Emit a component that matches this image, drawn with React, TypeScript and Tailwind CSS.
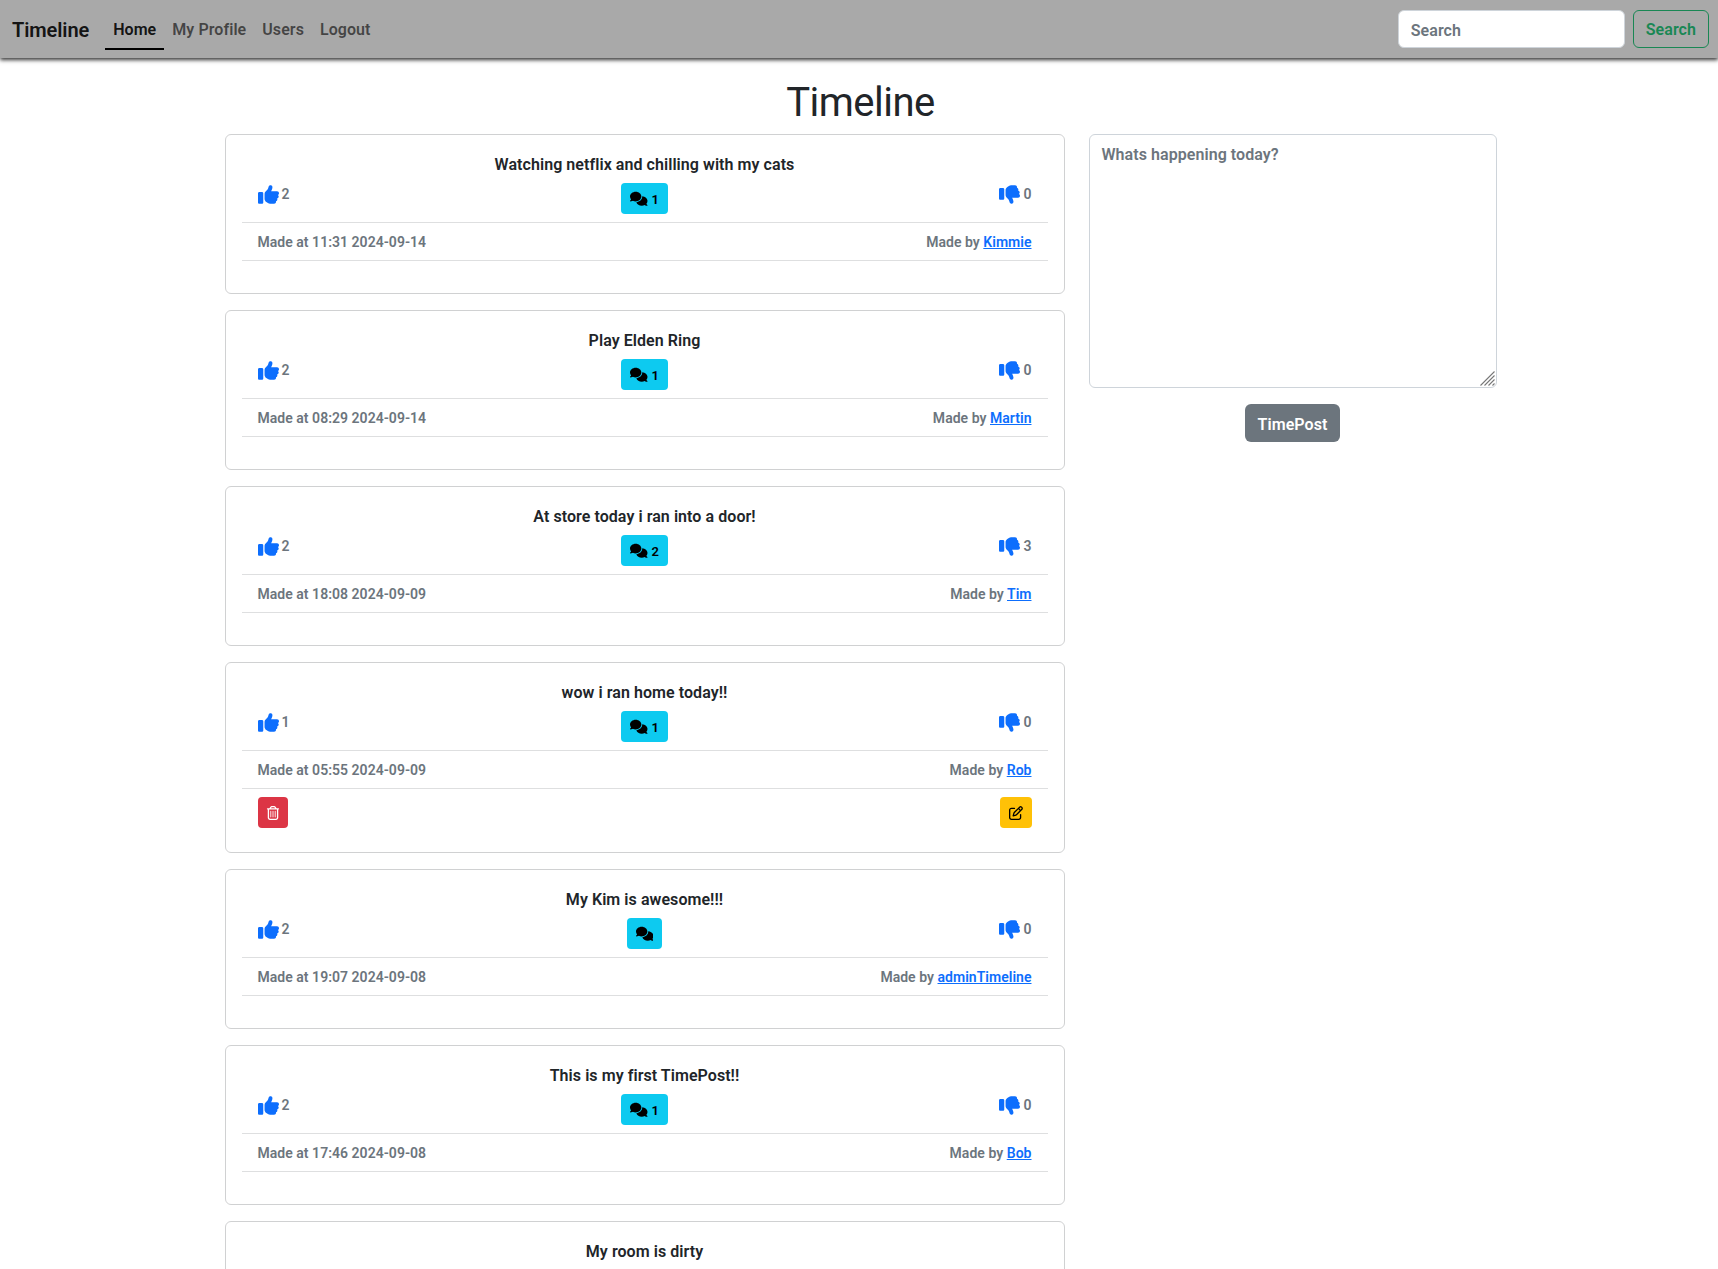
import React from "react";
import { FaComments, FaThumbsUp, FaThumbsDown, FaRegTrashCan, FaRegPenToSquare } from "react-icons/fa6";

type Stats = { likes: number; comments?: number; dislikes: number; at: string; by: string };
type Post = { text: string; stats?: Stats; own?: boolean };

const posts: Post[] = [
  { text: "Watching netflix and chilling with my cats", stats: { likes: 2, comments: 1, dislikes: 0, at: "11:31 2024-09-14", by: "Kimmie" } },
  { text: "Play Elden Ring", stats: { likes: 2, comments: 1, dislikes: 0, at: "08:29 2024-09-14", by: "Martin" } },
  { text: "At store today i ran into a door!", stats: { likes: 2, comments: 2, dislikes: 3, at: "18:08 2024-09-09", by: "Tim" } },
  { text: "wow i ran home today!!", stats: { likes: 1, comments: 1, dislikes: 0, at: "05:55 2024-09-09", by: "Rob" }, own: true },
  { text: "My Kim is awesome!!!", stats: { likes: 2, dislikes: 0, at: "19:07 2024-09-08", by: "adminTimeline" } },
  { text: "This is my first TimePost!!", stats: { likes: 2, comments: 1, dislikes: 0, at: "17:46 2024-09-08", by: "Bob" } },
  { text: "My room is dirty" },
];

function PostStats({ stats }: { stats: Stats }) {
  return (
    <>
      <div className="mt-[6px] grid h-[39px] grid-cols-3 px-4 text-[14px] text-[#6c757d]">
        <div className="flex h-[22px] items-center gap-[3px]">
          <FaThumbsUp className="text-[21px] text-[#0d6efd]" />
          {stats.likes}
        </div>
        <div className="flex items-start justify-center">
          <button className="flex h-[31px] items-center gap-[4px] rounded bg-[#0dcaf0] px-[9px] text-[14px] text-black">
            <FaComments className="mt-px text-[17.5px]" />
            {stats.comments !== undefined && <span className="pt-[2px] text-[13px]">{stats.comments}</span>}
          </button>
        </div>
        <div className="flex h-[22px] items-center justify-end gap-[3px]">
          <FaThumbsDown className="text-[21px] text-[#0d6efd]" />
          {stats.dislikes}
        </div>
      </div>
      <div className="flex h-[39px] items-center justify-between border-y border-[#dedfe0] px-4 pt-[2px] text-[14px] tracking-[0.03px] text-[#6c757d]">
        <span>Made at {stats.at}</span>
        <span>
          Made by <a className="text-[#0d6efd] underline">{stats.by}</a>
        </span>
      </div>
    </>
  );
}

function PostCard({ post }: { post: Post }) {
  return (
    <article className={`mb-4 rounded-md border border-[#d0d1d2] px-4 pt-[18px] ${post.own ? "h-[191px]" : "h-[160px]"}`}>
      <p className="text-center leading-[24px]">{post.text}</p>
      {post.stats && <PostStats stats={post.stats} />}
      {post.own && (
        <div className="mt-2 flex justify-between px-4">
          <button className="flex h-[31px] items-center rounded bg-[#dc3545] px-[8px] text-[14px] text-white">
            <FaRegTrashCan />
          </button>
          <button className="flex h-[31px] items-center rounded bg-[#ffc107] px-[9px] text-[14px] text-black">
            <FaRegPenToSquare />
          </button>
        </div>
      )}
    </article>
  );
}

export default function App() {
  return (
    <div className="h-[1269px] overflow-hidden bg-white font-[Roboto,sans-serif] text-[16px] font-semibold tracking-[0.06px] text-[#212529]">
      <nav className="flex h-[58px] items-center bg-[#a9a9a9] pr-[9px] pl-3 shadow-[0_2px_4px_rgba(0,0,0,0.8)]">
        <a className="mr-4 pt-[2px] text-[20px] tracking-[-0.1px] text-black/90">Timeline</a>
        <a className="mt-[2px] flex h-[40px] items-center border-b-2 border-black px-2 pt-px text-black/90">Home</a>
        <a className="px-2 pt-[2px] text-black/60">My Profile</a>
        <a className="px-2 pt-[2px] text-black/60">Users</a>
        <a className="px-2 pt-[2px] text-black/60">Logout</a>
        <div className="ml-auto flex gap-2">
          <input placeholder="Search" className="h-[38px] w-[227px] rounded-md border border-[#ced4da] bg-white px-3 pt-[2px] placeholder:text-[#6c757d]" />
          <button className="h-[38px] rounded-md border border-[#198754] px-3 pt-[2px] text-[#198754]">Search</button>
        </div>
      </nav>
      <h1 className="mt-[21px] mb-[7px] pl-[3px] text-center text-[40px] leading-[48px] font-normal tracking-[-0.5px]">Timeline</h1>
      <main className="ml-[224.5px] grid grid-cols-[840px_408px] gap-6">
        <section>
          {posts.map((p) => (
            <PostCard key={p.text} post={p} />
          ))}
        </section>
        <aside className="text-center">
          <div className="relative">
            <textarea
              placeholder="Whats happening today?"
              className="block h-[254px] w-full resize-none rounded-md border border-[#ced4da] px-[12px] py-[8px] placeholder:text-[#6c757d]"
            />
            <svg className="absolute right-[2px] bottom-[2px]" width="15" height="15" viewBox="0 0 15 15" stroke="#777" strokeWidth="1.1">
              <path d="M0.5 14.5 14.5 0.5M4.5 14.5 14.5 4.5M8.5 14.5 14.5 8.5M12.5 14.5 14.5 12.5" />
            </svg>
          </div>
          <button className="mt-4 h-[38px] rounded-md bg-[#6c757d] px-[13px] pt-[3px] text-white">TimePost</button>
        </aside>
      </main>
    </div>
  );
}
